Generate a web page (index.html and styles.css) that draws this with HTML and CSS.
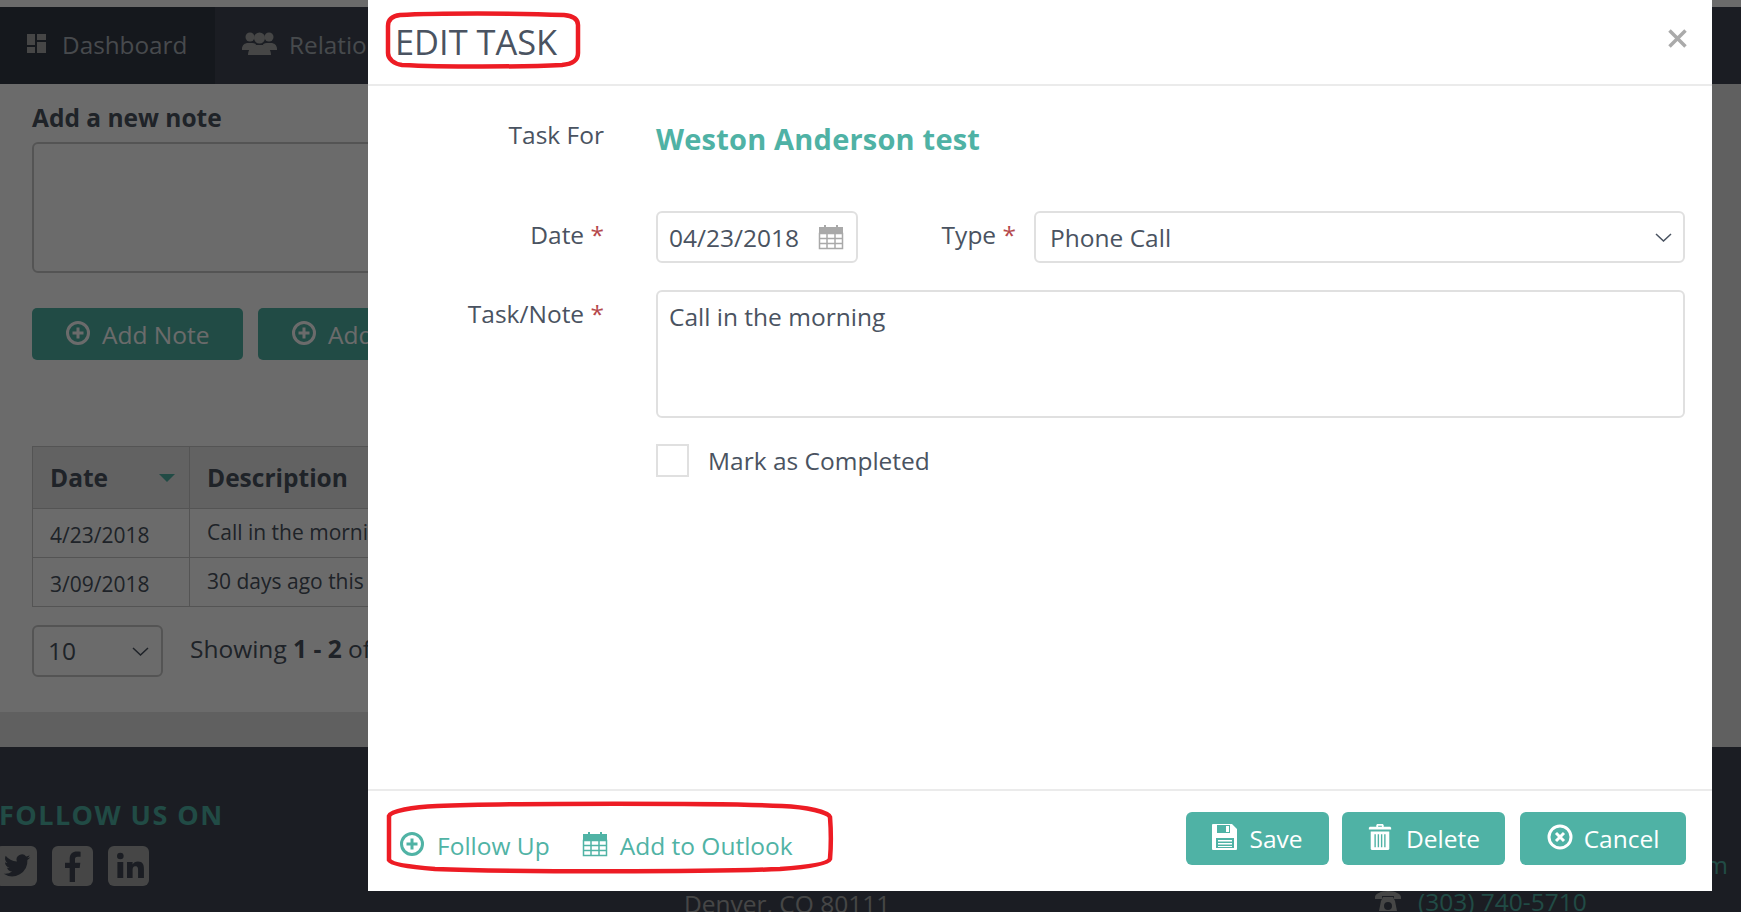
FILE: index.html
```html
<!DOCTYPE html>
<html lang="en">
<head>
<meta charset="utf-8">
<title>Edit Task</title>
<link rel="stylesheet" href="styles.css">
</head>
<body>
<div class="page">
  <div class="top-strip"></div>
  <nav class="nav">
    <a class="tab tab-active">
      <svg class="nav-ico-dash" viewBox="0 0 19 19"><path d="M0 0h8v11H0zM10 0h9v6h-9zM10 8h9v11h-9zM0 13h8v6H0z"/></svg>
      <span>Dashboard</span>
    </a>
    <a class="tab">
      <svg class="nav-ico-people" viewBox="0 0 35 24"><circle cx="8" cy="6" r="4.5"/><circle cx="27" cy="6" r="4.5"/><path d="M0 18c0-4 3-6 6-6h4c3 0 4 1 4 2l-5 5H0zM35 18c0-4-3-6-6-6h-4c-3 0-4 1-4 2l5 5h9z"/><circle cx="17.5" cy="7" r="5.5"/><path d="M6 24c0-6 4-9 8-10h7c4 1 8 4 8 10z"/></svg>
      <span>Relationships</span>
    </a>
  </nav>
  <main class="panel">
    <h2 class="note-title">Add a new note</h2>
    <div class="note-box"></div>
    <div class="note-actions">
      <a class="page-btn page-btn-note"><svg class="ico-plus" viewBox="0 0 26 26"><circle cx="13" cy="13" r="10.5"/><path d="M13 7.5v11M7.5 13h11"/></svg><span>Add Note</span></a>
      <a class="page-btn"><svg class="ico-plus" viewBox="0 0 26 26"><circle cx="13" cy="13" r="10.5"/><path d="M13 7.5v11M7.5 13h11"/></svg><span>Add Task</span></a>
    </div>
    <table class="notes">
      <thead>
        <tr><th class="col-date"><div class="th-sort">Date<i class="sort-caret"></i></div></th><th>Description</th></tr>
      </thead>
      <tbody>
        <tr><td class="cell-date">4/23/2018</td><td>Call in the morning</td></tr>
        <tr><td class="cell-date">3/09/2018</td><td>30 days ago this</td></tr>
      </tbody>
    </table>
    <div class="pager">
      <div class="size-select"><span>10</span><svg class="chev" viewBox="0 0 17 9"><path d="M1 1l7.5 7L16 1"/></svg></div>
      <div class="showing">Showing <b>1 - 2</b> of 2</div>
    </div>
  </main>
  <div class="band"></div>
  <footer class="foot">
    <div class="foot-follow">
      <div class="follow-title">FOLLOW US ON</div>
      <div class="socials">
        <span class="social"><svg viewBox="0 0 24 24"><path d="M22 5.500c-.8.3-1.500.5-2.300.6.800-.5 1.500-1.300 1.800-2.200-.8.500-1.700.8-2.600 1a4 4 0 0 0-7 3.700C8.500 8.400 5.500 6.800 3.500 4.300c-1 1.800-.5 4.100 1.300 5.300-.6 0-1.300-.2-1.800-.5 0 2 1.400 3.700 3.300 4.100-.6.200-1.200.2-1.800.1.500 1.600 2 2.800 3.800 2.800A8.200 8.200 0 0 1 2 17.800 11.500 11.500 0 0 0 19.800 7.500c.9-.5 1.600-1.200 2.200-2z"/></svg></span>
        <span class="social"><svg viewBox="0 0 24 24"><path d="M13.500 24V13.500h3.500l.5-4h-4V7c0-1.200.4-2 2-2h2.200V1.400C17 1.200 16 1.100 14.800 1.100c-3 0-5.300 1.900-5.300 5.300v3.100H6v4h3.500V24z"/></svg></span>
        <span class="social"><svg viewBox="0 0 24 24"><circle cx="5.500" cy="4.500" r="2.500"/><path d="M3.300 9h4.400v12H3.300zM10.500 9h4.200v1.800c.7-1.200 2.100-2.100 4-2.100 3.700 0 4.500 2.500 4.500 5.700V21h-4.400v-5.800c0-1.500-.2-3-2-3s-2.100 1.400-2.100 3V21h-4.200z"/></svg></span>
      </div>
    </div>
    <div class="foot-address">Denver, CO 80111</div>
    <div class="foot-contact">
      <div class="foot-mail">com</div>
      <div class="foot-phone"><svg class="ico-phone" viewBox="0 0 26 24"><path d="M0 7c0-3 6-6 13-6s13 3 13 6v2h-7V6H7v3H0zM6 11l2-4h10l2 4 2 10H4zm7 1a4 4 0 1 0 0 8 4 4 0 0 0 0-8z"/></svg><span>(303) 740-5710</span></div>
    </div>
  </footer>
</div>
<div class="backdrop"></div>
<section class="modal">
  <header class="m-head">
    <h1 class="m-title">EDIT TASK</h1>
    <svg class="m-close" viewBox="0 0 19 19"><path d="M1.500 1.500l16 16M17.500 1.500l-16 16"/></svg>
    <svg class="mark mark-title" viewBox="0 0 194 56"><path d="M14 3C50 1 130 1 178 3c10 1 14 5 14 10v28c0 8-6 11-16 12-40 2-120 2-160 0-8-1-14-6-14-12V14C2 8 6 4 14 3z"/></svg>
  </header>
  <div class="m-body">
    <div class="row row-for">
      <div class="lbl lbl-for">Task For</div>
      <div class="client">Weston Anderson test</div>
    </div>
    <div class="row row-date">
      <div class="lbl lbl-field">Date <em>*</em></div>
      <div class="field field-date">
        <span>04/23/2018</span>
        <svg class="ico-cal ico-cal-grey" viewBox="0 0 26 26"><path d="M6 1h2v3H6zM18 1h2v3h-2z"/><path d="M1 3h24v6H1z"/><path class="cal-grid" d="M1.500 9.500h23v15h-23zM1.500 14.500h23M1.500 19.500h23M9 9.500v15M17 9.500v15"/></svg>
      </div>
      <div class="lbl lbl-type">Type <em>*</em></div>
      <div class="field field-type">
        <span>Phone Call</span>
        <svg class="chev" viewBox="0 0 17 9"><path d="M1 1l7.500 7L16 1"/></svg>
      </div>
    </div>
    <div class="row row-note">
      <div class="lbl lbl-field">Task/Note <em>*</em></div>
      <div class="field field-note">Call in the morning</div>
    </div>
    <div class="row row-check">
      <div class="lbl"></div>
      <span class="check"></span>
      <span class="check-label">Mark as Completed</span>
    </div>
  </div>
  <footer class="m-foot">
    <div class="links">
      <a class="link"><svg class="ico-plus" viewBox="0 0 26 26"><circle cx="13" cy="13" r="10.500"/><path d="M13 7.500v11M7.500 13h11"/></svg><span>Follow Up</span></a>
      <a class="link"><svg class="ico-cal" viewBox="0 0 26 26"><path d="M6 1h2v3H6zM18 1h2v3h-2z"/><path d="M1 3h24v6H1z"/><path class="cal-grid" d="M1.500 9.500h23v15h-23zM1.500 14.500h23M1.500 19.500h23M9 9.500v15M17 9.500v15"/></svg><span>Add to Outlook</span></a>
    </div>
    <div class="btns">
      <a class="btn btn-save"><svg class="ico-btn" viewBox="0 0 26 26"><path fill-rule="evenodd" d="M1 0h19l5 5v20a1 1 0 0 1-1 1H1a1 1 0 0 1-1-1V1a1 1 0 0 1 1-1zm4 1v8h13V1zm9 1h3v6h-3zM4 14v10h18V14zm2 2h14v1.500H6zm0 3h14v1.500H6zm0 3h14v1H6z"/></svg><span>Save</span></a>
      <a class="btn btn-del"><svg class="ico-btn" viewBox="0 0 24 28"><path fill-rule="evenodd" d="M8 3V1l1-1h6l1 1v2h7l1 1v2H0V4l1-1zm2-1v1h4V2zM2 8h20v19l-1 1H3l-1-1zm4 3v14h1.500V11zm3.500 0v14H11V11zm3.500 0v14h1.500V11zm3.500 0v14H18V11z"/></svg><span>Delete</span></a>
      <a class="btn btn-cancel"><svg class="ico-cancel" viewBox="0 0 26 26"><circle cx="13" cy="13" r="11"/><path d="M9 9l8 8M17 9l-8 8"/></svg><span>Cancel</span></a>
    </div>
    <svg class="mark mark-foot" viewBox="0 0 445 71"><path d="M50 4C120 1 340 1 395 4c25 1 46 6 48 11 1 13 1 30 0 42-2 5-22 8-50 10-70 3-270 3-345 0-25-2-44-5-46-9V14C4 9 25 5 50 4z"/></svg>
  </footer>
</section>
</body>
</html>
```

FILE: styles.css
```css
* { box-sizing: border-box; }
html, body { margin: 0; height: 100%; overflow: hidden; }
body { font-family: "Open Sans", "Noto Sans", sans-serif; font-size: 24.5px; color: #4a5361; background: #e4e4e4; }
h1, h2 { margin: 0; }
em { font-style: normal; color: #b5494c; }
svg { display: block; flex: none; }

.page { height: 912px; overflow: hidden; display: flex; flex-direction: column; }
.top-strip { height: 7px; background: #fff; }
.nav { height: 77px; flex: none; display: flex; background: #404753; color: #aab0b8; font-size: 24.3px; }
.tab { display: flex; align-items: center; gap: 12px; padding: 0 27px 3px; white-space: nowrap; }
.tab-active { width: 215px; gap: 16px; background: #323945; }
.nav-ico-dash { width: 19px; height: 19px; fill: #a8a8a8; margin-top: -1px; }
.nav-ico-people { width: 35px; height: 24px; fill: #a8a8a8; margin-top: -3px; }

.panel { height: 628px; flex: none; width: 1700px; background: #fff; padding: 19px 0 0 32px; }
.note-title { font-size: 24.5px; line-height: 30px; font-weight: 700; color: #4a5361; height: 39px; }
.note-box { width: 1000px; height: 131px; border: 2px solid #c9c9c9; border-radius: 6px; }
.note-actions { display: flex; gap: 15px; margin-top: 35px; }
.page-btn { height: 52px; display: flex; align-items: center; gap: 11px; padding: 0 33px; background: #4fb2a5; color: #fff; border-radius: 5px; white-space: nowrap; }
.page-btn-note { width: 211px; }
.ico-plus { width: 26px; height: 26px; fill: none; stroke: currentColor; stroke-width: 3; }
.page-btn .ico-plus { margin-top: -3px; }

.notes { margin-top: 86px; border-collapse: collapse; width: 1000px; font-size: 21px; table-layout: fixed; }
.notes th, .notes td { border: 1px solid #c9c9c9; text-align: left; padding: 0 17px; }
.notes th { height: 62px; font-size: 24.5px; font-weight: 700; background: #e9e9e9; }
.notes td { height: 49px; padding-bottom: 2px; }
.notes .cell-date { padding-bottom: 0; padding-top: 4px; }
.col-date { width: 157px; }
.th-sort { display: flex; align-items: center; justify-content: space-between; }
.sort-caret { width: 0; height: 0; border-left: 8px solid transparent; border-right: 8px solid transparent; border-top: 8px solid #4fb2a5; margin-right: -3px; }

.pager { display: flex; align-items: center; gap: 27px; margin-top: 18px; }
.size-select { width: 131px; height: 52px; border: 2px solid #c9c9c9; border-radius: 6px; display: flex; align-items: center; justify-content: space-between; padding: 0 12px 0 14px; }
.size-select span { margin-top: -1px; }
.chev { width: 17px; height: 9px; fill: none; stroke: #4a5361; stroke-width: 1.500; }
.showing { margin-top: -6px; white-space: nowrap; }

.band { height: 35px; flex: none; }
.foot { flex: 1; background: #404753; color: #4fb2a5; display: flex; min-height: 0; overflow: hidden; position: relative; }
.foot-follow { width: 684px; padding: 48px 0 0 0; flex: none; }
.follow-title { font-size: 27px; line-height: 40px; font-weight: 700; letter-spacing: 1.450px; margin-left: -1px; white-space: nowrap; }
.socials { display: flex; gap: 15px; margin: 11px 0 0 -4px; }
.social { width: 41px; height: 40px; border-radius: 6px; background: #a8a8a8; display: flex; align-items: center; justify-content: center; }
.social svg { width: 32px; height: 32px; fill: #404753; }
.foot-address { width: 691px; flex: none; padding-top: 140px; color: #a8a8a8; white-space: nowrap; }
.foot-contact { flex: 1; position: relative; white-space: nowrap; }
.foot-mail { padding-top: 101px; line-height: 34px; text-align: right; padding-right: 13px; }
.foot-phone { display: flex; align-items: center; gap: 17px; margin-top: 3px; }
.ico-phone { width: 26px; height: 24px; fill: #a8a8a8; }

.backdrop { position: fixed; inset: 0; background: rgba(0, 0, 0, .58); }

.modal { position: fixed; left: 368px; top: 0; width: 1344px; height: 891px; background: #fff; display: flex; flex-direction: column; }
.m-head { position: relative; height: 86px; flex: none; border-bottom: 2px solid #ebebeb; display: flex; align-items: center; justify-content: space-between; padding: 0 25px 4px 27px; }
.m-title { font-size: 34.4px; line-height: 44px; font-weight: 400; color: #4a5361; margin-top: 3px; }
.m-close { width: 19px; height: 19px; fill: none; stroke: #aaa; stroke-width: 3.500; margin-top: -4px; }
.mark { position: absolute; fill: none; stroke: #ed1c24; stroke-width: 4.500; overflow: visible; }
.mark-title { left: 18px; top: 12px; width: 194px; height: 56px; }

.m-body { flex: 1; padding: 32px 27px 0 0; }
.row { display: flex; }
.row-for { height: 93px; }
.row-date { height: 52px; margin-bottom: 27px; }
.row-note { height: 128px; margin-bottom: 26px; }
.row-check { height: 33px; align-items: center; }
.lbl { width: 236px; flex: none; text-align: right; margin-right: 52px; line-height: 36px; }
.lbl-for { margin-top: -1px; }
.lbl-field { padding-top: 6px; }
.client { font-size: 29px; line-height: 40px; font-weight: 700; color: #4fb2a5; letter-spacing: .2px; margin-top: 1px; }
.field { border: 2px solid #e0e0e0; border-radius: 6px; display: flex; }
.field-date { width: 202px; align-items: center; justify-content: space-between; padding: 0 12px 0 11px; }
.lbl-type { width: 158px; margin: 0 18px 0 0; padding-top: 6px; }
.field-type { flex: 1; align-items: center; justify-content: space-between; padding: 0 11px 0 14px; }
.field-note { flex: 1; padding: 8px 11px; align-items: flex-start; }
.ico-cal { width: 26px; height: 26px; fill: #50b3a5; stroke: none; }
.ico-cal-grey { fill: #a9a9a9; }
.cal-grid { fill: none; stroke: #50b3a5; stroke-width: 1.500; }
.ico-cal-grey .cal-grid { stroke: #a9a9a9; }
.check { width: 33px; height: 33px; border: 2px solid #e0e0e0; flex: none; }
.check-label { margin-left: 19px; }

.m-foot { position: relative; height: 102px; flex: none; border-top: 2px solid #ebebeb; display: flex; align-items: flex-start; justify-content: space-between; padding: 0 26px 0 31px; }
.links { display: flex; gap: 32px; padding-top: 34px; }
.link { display: flex; align-items: center; gap: 12px; color: #50b3a5; white-space: nowrap; }
.link span { padding-top: 4px; }
.btns { display: flex; gap: 13px; padding-top: 21px; }
.btn { height: 53px; display: flex; align-items: center; justify-content: center; gap: 11px; background: #4fb2a5; color: #fff; border-radius: 6px; white-space: nowrap; }
.btn-save { width: 143px; }
.btn-del { width: 163px; gap: 13px; }
.btn-cancel { width: 166px; margin-left: 2px; }
.ico-btn { height: 26px; width: 26px; fill: #fff; margin-top: -3px; }
.ico-cancel { height: 26px; width: 26px; fill: none; stroke: #fff; stroke-width: 3; margin-top: -3px; }
.mark-foot { left: 19px; top: 11px; width: 445px; height: 71px; }
```
